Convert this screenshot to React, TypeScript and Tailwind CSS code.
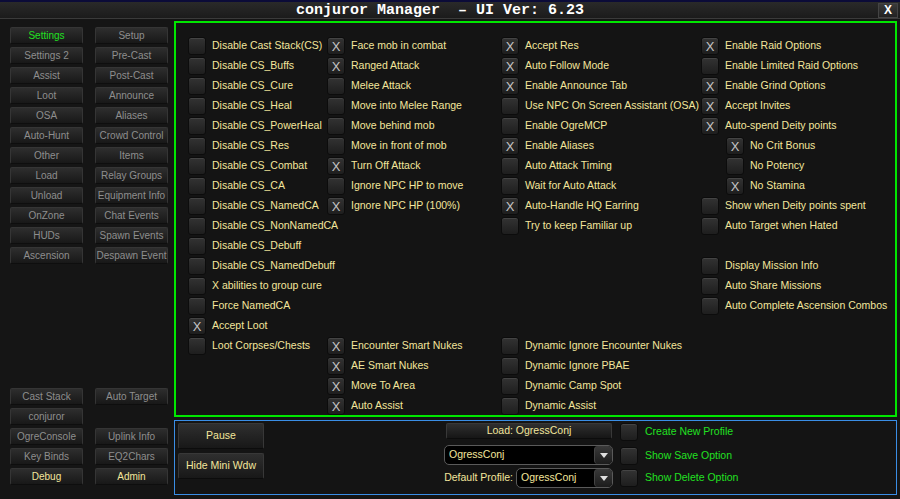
import React from "react";

type Item = { label?: string; on?: boolean; sub?: boolean } | null;

const col1: Item[] = [
  { label: "Disable Cast Stack(CS)" },
  { label: "Disable CS_Buffs" },
  { label: "Disable CS_Cure" },
  { label: "Disable CS_Heal" },
  { label: "Disable CS_PowerHeal" },
  { label: "Disable CS_Res" },
  { label: "Disable CS_Combat" },
  { label: "Disable CS_CA" },
  { label: "Disable CS_NamedCA" },
  { label: "Disable CS_NonNamedCA" },
  { label: "Disable CS_Debuff" },
  { label: "Disable CS_NamedDebuff" },
  { label: "X abilities to group cure" },
  { label: "Force NamedCA" },
  { label: "Accept Loot", on: true },
  { label: "Loot Corpses/Chests" },
];

const col2: Item[] = [
  { label: "Face mob in combat", on: true },
  { label: "Ranged Attack", on: true },
  { label: "Melee Attack" },
  { label: "Move into Melee Range" },
  { label: "Move behind mob" },
  { label: "Move in front of mob" },
  { label: "Turn Off Attack", on: true },
  { label: "Ignore NPC HP to move" },
  { label: "Ignore NPC HP (100%)", on: true },
  null, null, null, null, null, null,
  { label: "Encounter Smart Nukes", on: true },
  { label: "AE Smart Nukes", on: true },
  { label: "Move To Area", on: true },
  { label: "Auto Assist", on: true },
];

const col3: Item[] = [
  { label: "Accept Res", on: true },
  { label: "Auto Follow Mode", on: true },
  { label: "Enable Announce Tab", on: true },
  { label: "Use NPC On Screen Assistant (OSA)" },
  { label: "Enable OgreMCP" },
  { label: "Enable Aliases", on: true },
  { label: "Auto Attack Timing" },
  { label: "Wait for Auto Attack" },
  { label: "Auto-Handle HQ Earring", on: true },
  { label: "Try to keep Familiar up" },
  null, null, null, null, null,
  { label: "Dynamic Ignore Encounter Nukes" },
  { label: "Dynamic Ignore PBAE" },
  { label: "Dynamic Camp Spot" },
  { label: "Dynamic Assist" },
];

const col4: Item[] = [
  { label: "Enable Raid Options", on: true },
  { label: "Enable Limited Raid Options" },
  { label: "Enable Grind Options", on: true },
  { label: "Accept Invites", on: true },
  { label: "Auto-spend Deity points", on: true },
  { label: "No Crit Bonus", on: true, sub: true },
  { label: "No Potency", sub: true },
  { label: "No Stamina", on: true, sub: true },
  { label: "Show when Deity points spent" },
  { label: "Auto Target when Hated" },
  null,
  { label: "Display Mission Info" },
  { label: "Auto Share Missions" },
  { label: "Auto Complete Ascension Combos" },
];

const navTop: [string, string][] = [
  ["Settings", "Setup"],
  ["Settings 2", "Pre-Cast"],
  ["Assist", "Post-Cast"],
  ["Loot", "Announce"],
  ["OSA", "Aliases"],
  ["Auto-Hunt", "Crowd Control"],
  ["Other", "Items"],
  ["Load", "Relay Groups"],
  ["Unload", "Equipment Info"],
  ["OnZone", "Chat Events"],
  ["HUDs", "Spawn Events"],
  ["Ascension", "Despawn Event"],
];

const navBottom: [string, string][] = [
  ["Cast Stack", "Auto Target"],
  ["conjuror", ""],
  ["OgreConsole", "Uplink Info"],
  ["Key Binds", "EQ2Chars"],
  ["Debug", "Admin"],
];

function Box({ on }: { on?: boolean }) {
  return (
    <div className="w-[18px] h-[18px] shrink-0 rounded-[3px] border border-[#0c0c0c] bg-gradient-to-b from-[#333333] to-[#1e1e1e] shadow-[inset_0_1px_0_#444] flex items-center justify-center text-[13px] leading-none text-[#c4c4c4]">
      {on ? "X" : ""}
    </div>
  );
}

function Col({ items, w }: { items: Item[]; w: string }) {
  return (
    <div className={`flex flex-col ${w}`}>
      {items.map((it, i) =>
        it ? (
          <div key={i} className={`h-[20px] shrink-0 flex items-center gap-[6px] ${it.sub ? "pl-[25px]" : ""}`}>
            <Box on={it.on} />
            <span className="whitespace-nowrap text-[#f3e69c]">{it.label}</span>
          </div>
        ) : (
          <div key={i} className="h-[20px] shrink-0" />
        )
      )}
    </div>
  );
}

function NavBtn({ label, color }: { label: string; color?: string }) {
  if (!label) return <div className="h-[17px]" />;
  return (
    <div
      className={`h-[17px] rounded-[2px] border border-[#353535] border-b-[#0e0e0e] bg-gradient-to-b from-[#2e2e2e] to-[#181818] flex items-center justify-center whitespace-nowrap overflow-hidden text-[10px] ${color ?? "text-[#8e8e8e]"}`}
    >
      {label}
    </div>
  );
}

function Dropdown({ value, w }: { value: string; w: string }) {
  return (
    <div className={`${w} h-[20px] rounded-[5px] border border-[#5a5a5a] bg-black flex items-center`}>
      <span className="flex-1 pl-[4px] text-[#f3e69c]">{value}</span>
      <div className="w-[18px] h-[18px] rounded-[4px] border-l border-[#444] bg-gradient-to-b from-[#3a3a3a] to-[#1c1c1c] flex items-center justify-center">
        <svg width="8" height="5" viewBox="0 0 8 5">
          <path d="M0 0 H8 L4 5 Z" fill="#e0e0e0" />
        </svg>
      </div>
    </div>
  );
}

export default function App() {
  return (
    <div
      className="w-[900px] h-[499px] bg-[#151515] overflow-hidden flex flex-col text-[10.5px]"
      style={{ fontFamily: '"Liberation Sans", Arial, sans-serif' }}
    >
      {/* title bar */}
      <div className="h-[19px] shrink-0 border-t-2 border-[#0b0b38] border-b border-b-[#3a3a3a] bg-gradient-to-b from-[#2a2a2a] to-[#1b1b1b] flex items-center relative">
        <div
          className="flex-1 text-center text-white font-bold text-[15px] leading-none pl-[2px] whitespace-pre"
          style={{ fontFamily: '"Liberation Mono", "Courier New", monospace' }}
        >
          conjuror Manager  – UI Ver: 6.23
        </div>
        <div className="w-[20px] h-[15px] mr-[2px] border border-[#444] bg-gradient-to-b from-[#3a3a3a] to-[#222] flex items-center justify-center text-white font-bold text-[12px] leading-none">
          X
        </div>
      </div>

      <div className="flex flex-1">
        {/* sidebar */}
        <div className="w-[174px] shrink-0 flex flex-col pl-[10px] pr-[6px] pt-[8px]">
          <div className="grid grid-cols-[73px_73px] gap-x-[12px] gap-y-[3px]">
            {navTop.flatMap(([a, b], i) => [
              <NavBtn key={`a${i}`} label={a} color={i === 0 ? "text-[#22e022]" : undefined} />,
              <NavBtn key={`b${i}`} label={b} />,
            ])}
          </div>
          <div className="grid grid-cols-[73px_73px] gap-x-[12px] gap-y-[3px] mt-[124px]">
            {navBottom.flatMap(([a, b], i) => [
              <NavBtn key={`c${i}`} label={a} color={i === 4 ? "text-[#f3e69c]" : undefined} />,
              <NavBtn key={`d${i}`} label={b} color={i === 4 ? "text-[#f3e69c]" : undefined} />,
            ])}
          </div>
        </div>

        {/* main */}
        <div className="w-[723px] flex flex-col pt-[2px]">
          <div className="h-[396px] shrink-0 border-2 border-[#00e600] bg-[#141414] flex pl-[12px] pt-[13px]">
            <Col items={col1} w="w-[139px]" />
            <Col items={col2} w="w-[174px]" />
            <Col items={col3} w="w-[200px]" />
            <Col items={col4} w="flex-1" />
          </div>

          <div className="mt-[3px] h-[75px] shrink-0 border border-[#3a8ee6] bg-[#141414] flex">
            <div className="ml-[3px] mt-[2px] flex flex-col gap-[4px] w-[86px]">
              <div className="h-[26px] rounded-[2px] border border-[#383838] border-b-[#0c0c0c] bg-gradient-to-b from-[#2f2f2f] to-[#181818] flex items-center justify-center text-[#f3e69c]">
                Pause
              </div>
              <div className="h-[26px] rounded-[2px] border border-[#383838] border-b-[#0c0c0c] bg-gradient-to-b from-[#2f2f2f] to-[#181818] flex items-center justify-center text-[#f3e69c]">
                Hide Mini Wdw
              </div>
            </div>

            <div className="ml-[179px] mt-[2px] w-[170px] flex flex-col">
              <div className="ml-[3px] w-[166px] h-[16px] rounded-[2px] border border-[#383838] border-b-[#0c0c0c] bg-gradient-to-b from-[#2f2f2f] to-[#161616] flex items-center justify-center text-[#f3e69c]">
                Load: OgressConj
              </div>
              <div className="mt-[6px] ml-[1px]">
                <Dropdown value="OgressConj" w="w-[169px]" />
              </div>
              <div className="mt-[3px] flex items-center justify-end gap-[3px]">
                <span className="text-[#f3e69c] whitespace-nowrap">Default Profile:</span>
                <Dropdown value="OgressConj" w="w-[97px]" />
              </div>
            </div>

            <div className="ml-[7px] mt-[2px] flex flex-col">
              <div className="h-[18px] flex items-center gap-[7px]">
                <Box />
                <span className="text-[#22e022]">Create New Profile</span>
              </div>
              <div className="mt-[6px] h-[18px] flex items-center gap-[7px]">
                <Box />
                <span className="text-[#22e022]">Show Save Option</span>
              </div>
              <div className="mt-[4px] h-[18px] flex items-center gap-[7px]">
                <Box />
                <span className="text-[#22e022]">Show Delete Option</span>
              </div>
            </div>
          </div>
        </div>
      </div>
    </div>
  );
}
